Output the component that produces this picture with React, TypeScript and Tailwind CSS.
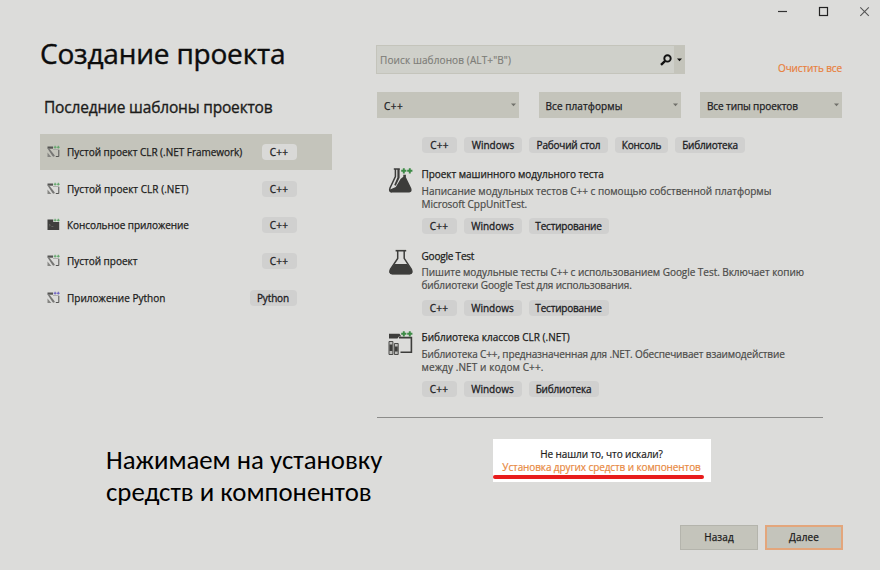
import React from "react";

function Plus({ x, y, s, c }: { x: number; y: number; s: number; c: string }) {
  return (
    <path
      d={`M${x} ${y + s / 2}h${s}M${x + s / 2} ${y}v${s}`}
      stroke={c}
      strokeWidth={s * 0.37}
      fill="none"
    />
  );
}

function ProjectIcon({ accent = "#5fa568" }: { accent?: string }) {
  return (
    <svg className="-mt-px block h-[13px] w-[13px]" viewBox="0 0 13 13">
      <path d="M.5 1.500h5.500v2.200H.5z" fill="#555553" />
      <path d="M.5 3.500h1.800L7.800 10.600 7 11.800 5.600 11.200z" fill="#777775" />
      <path d="M.5 7.500l3.800 4.500H.5z" fill="#858582" />
      <path d="M8.800 11.500h3V4.800" fill="none" stroke="#555553" strokeWidth="1" />
      <path d="M6 4.500h5.800" stroke="#a5a5a1" strokeWidth=".8" />
      <Plus x={6.700} y={0.800} s={2.800} c={accent} />
      <Plus x={9.900} y={0.800} s={2.800} c={accent} />
    </svg>
  );
}

function ConsoleIcon() {
  return (
    <svg className="-mt-px block h-[13px] w-[13px]" viewBox="0 0 13 13">
      <path d="M.5 1.500h5.700v2.500h6V12H.5z" fill="#3f3f3d" />
      <path d="M2 6.200l1.400 1L2 8.200M4.400 8.500h2" fill="none" stroke="#7c7c78" strokeWidth=".6" />
      <Plus x={6.700} y={0.800} s={2.800} c="#5fa568" />
      <Plus x={9.900} y={0.800} s={2.800} c="#5fa568" />
    </svg>
  );
}

function UnitTestIcon() {
  return (
    <svg className="block h-[28px] w-[28px]" viewBox="0 0 28 28">
      <path d="M6.800 3h6" stroke="#3d3d3b" strokeWidth="1.500" />
      <path d="M8.400 3v7.500L3 22q-1.200 3.800 1.800 4" fill="none" stroke="#3d3d3b" strokeWidth="1.500" />
      <path d="M10.400 3h2.200v8.700l-3.800 8-1.600-.8 3.200-7.400z" fill="#3d3d3b" />
      <path d="M13.500 13l2.800-2.300V8.800h2.600v2.400l5.400 11q1.200 3.900-2 4.200H5.200Q2.500 26.200 3 23.500L8.800 21z" fill="#3d3d3b" />
      <Plus x={14.200} y={2.200} s={5.200} c="#3d8b46" />
      <Plus x={20.200} y={2.200} s={5.200} c="#3d8b46" />
    </svg>
  );
}

function FlaskIcon() {
  return (
    <svg className="block h-[28px] w-[28px]" viewBox="0 0 28 28">
      <path d="M8.600 2.700h10.600" stroke="#3d3d3b" strokeWidth="1.600" />
      <path d="M10.700 3v7.400L3.400 21.400q-1.600 4.100 1.800 4.400h17.400q3.400-.3 1.800-4.400L17.200 10.400V3" fill="none" stroke="#3d3d3b" strokeWidth="1.500" />
      <path d="M7.400 16h13l4.400 6q1.200 3.800-2.200 4.200H5.200Q1.800 25.800 3 22z" fill="#3d3d3b" />
    </svg>
  );
}

function LibraryIcon() {
  return (
    <svg className="block h-[28px] w-[28px]" viewBox="0 0 28 28">
      <path d="M2 9.500V4.800h10.500l1.800 2.700h-2.300L10.500 9.500z" fill="#3d3d3b" />
      <path d="M12 8.600H24.400V23.300H13.500" fill="none" stroke="#3d3d3b" strokeWidth="1.600" />
      <path d="M2 12.500h3.900v13H2zM7.400 14.500h3.800v11H7.400z" fill="#bdbdba" stroke="#4a4a48" strokeWidth="1" />
      <path d="M2.500 15.500h2.900v6.500H2.500zM8 17.500h2.700v5H8z" fill="#3d3d3b" />
      <Plus x={14.200} y={2.200} s={5.200} c="#3d8b46" />
      <Plus x={20.200} y={2.200} s={5.200} c="#3d8b46" />
    </svg>
  );
}

function Chip({ label, size, light }: { label: string; size: string; light?: boolean }) {
  return (
    <span
      className={`flex h-4 shrink-0 items-center justify-center whitespace-nowrap rounded-[4px] text-[10px] leading-4 text-[#20201f] [-webkit-text-stroke:0.3px] ${size} ${light ? "bg-[#d9d9d7]" : "bg-[#d0d0cf]"}`}
    >
      {label}
    </span>
  );
}

const recent = [
  { name: "Пустой проект CLR (.NET Framework)", cls: "tracking-[-0.02px]", icon: <ProjectIcon />, tag: "C++", tagCls: "w-[35px] tracking-[0.3px]" },
  { name: "Пустой проект CLR (.NET)", cls: "tracking-[0.04px]", icon: <ProjectIcon />, tag: "C++", tagCls: "w-[35px] tracking-[0.3px]" },
  { name: "Консольное приложение", cls: "tracking-[-0.06px]", icon: <ConsoleIcon />, tag: "C++", tagCls: "w-[35px] tracking-[0.3px]" },
  { name: "Пустой проект", cls: "tracking-[-0.02px]", icon: <ProjectIcon />, tag: "C++", tagCls: "w-[35px] tracking-[0.3px]" },
  { name: "Приложение Python", cls: "tracking-[0.01px]", icon: <ProjectIcon accent="#6a5fc0" />, tag: "Python", tagCls: "w-[47px] tracking-[-0.15px]" },
];

const cpp = { label: "C++", size: "w-[35px] tracking-[0.3px]" };
const win = { label: "Windows", size: "w-[58px]" };
const testing = { label: "Тестирование", size: "w-[80px] tracking-[-0.2px]" };
const library = { label: "Библиотека", size: "w-[70px] tracking-[-0.2px]" };

const templates = [
  {
    name: "Проект машинного модульного теста",
    nameCls: "tracking-[-0.04px]",
    icon: <UnitTestIcon />,
    lines: [
      { text: "Написание модульных тестов C++ с помощью собственной платформы", cls: "tracking-[0.01px]" },
      { text: "Microsoft CppUnitTest.", cls: "tracking-[-0.06px]" },
    ],
    tags: [cpp, win, testing],
  },
  {
    name: "Google Test",
    nameCls: "tracking-[-0.2px]",
    icon: <FlaskIcon />,
    lines: [
      { text: "Пишите модульные тесты C++ с использованием Google Test. Включает копию", cls: "tracking-[-0.04px]" },
      { text: "библиотеки Google Test для использования.", cls: "tracking-[-0.14px]" },
    ],
    tags: [cpp, win, testing],
  },
  {
    name: "Библиотека классов CLR (.NET)",
    nameCls: "tracking-[0.01px]",
    icon: <LibraryIcon />,
    lines: [
      { text: "Библиотека C++, предназначенная для .NET. Обеспечивает взаимодействие", cls: "tracking-[-0.14px]" },
      { text: "между .NET и кодом C++.", cls: "tracking-[0.1px]" },
    ],
    tags: [cpp, win, library],
  },
];

function Combo({ label, cls }: { label: string; cls: string }) {
  return (
    <div className="flex h-[26px] w-[142px] items-center justify-between bg-[#c4c4bb] pl-[7px] pr-[3px] text-[10px] text-[#20201f] [-webkit-text-stroke:0.25px]">
      <span className={`whitespace-nowrap pt-[2px] ${cls}`}>{label}</span>
      <svg className="h-[4px] w-[5px]" viewBox="0 0 5 4">
        <path d="M0 .5h5L2.500 3.300z" fill="#70706b" />
      </svg>
    </div>
  );
}

export default function App() {
  return (
    <div className="flex h-[570px] w-[880px] overflow-hidden bg-[#dcdcda] font-['Open_Sans','Noto_Sans',sans-serif] text-[#1c1c1b]">
      <section className="flex w-[376px] shrink-0 flex-col pl-10">
        <h1 className="mt-[33px] h-10 whitespace-nowrap text-[28px] leading-10 tracking-[-0.2px] text-[#0c0c0c] [-webkit-text-stroke:0.4px]">Создание проекта</h1>
        <h2 className="ml-1 mt-[22px] h-6 whitespace-nowrap text-[15.500px] leading-6 tracking-[-0.18px] [-webkit-text-stroke:0.35px]">Последние шаблоны проектов</h2>
        <ul className="mt-[15px] w-[291.500px]">
          {recent.map((r, i) => (
            <li key={r.name} className={`flex h-[36.400px] items-center pl-[7px] pr-[35px] ${i === 0 ? "bg-[#c4c4bb]" : ""}`}>
              {r.icon}
              <span className={`ml-[7px] grow whitespace-nowrap pt-px text-[10px] [-webkit-text-stroke:0.25px] ${r.cls}`}>{r.name}</span>
              <Chip label={r.tag} size={r.tagCls} light={i === 0} />
            </li>
          ))}
        </ul>
        <p className="ml-[66px] mt-[128px] whitespace-nowrap font-['Carlito','Lato',sans-serif] text-[26.800px] leading-8 text-black">
          <span className="block">Нажимаем на установку</span>
          <span className="block">средств и компонентов</span>
        </p>
      </section>

      <section className="flex grow flex-col">
        <div className="flex h-[23px] items-center justify-end gap-[30px] pr-[10px]">
          <svg className="h-[11px] w-[11px]" viewBox="0 0 11 11"><path d="M1 5.500h9" stroke="#333" strokeWidth="1.200" /></svg>
          <svg className="h-[11px] w-[11px]" viewBox="0 0 11 11"><rect x="1.500" y="1.500" width="8" height="8" fill="none" stroke="#222" strokeWidth="1.200" /></svg>
          <svg className="h-[11px] w-[11px]" viewBox="0 0 11 11"><path d="M1.300 1.300l8.500 8.500M9.800 1.300L1.300 9.800" stroke="#555" strokeWidth="1.100" /></svg>
        </div>

        <div className="mt-[22px] flex h-[29px] items-start">
          <div className="flex h-[29px] w-[309px] items-center border border-[#c4c4bb] bg-[#cfd0ca] pl-[3px] text-[10px] text-[#7d7d78]">
            <span className="grow whitespace-nowrap pt-[2px] tracking-[0.120px] [-webkit-text-stroke:0.15px]">Поиск шаблонов (ALT+"В")</span>
            <svg className="mr-[2px] h-[12px] w-[12px]" viewBox="0 0 12 12">
              <circle cx="7.500" cy="4.400" r="3.200" fill="none" stroke="#111" strokeWidth="1.900" />
              <path d="M5.200 6.800L1 10.800" stroke="#111" strokeWidth="2.400" />
            </svg>
            <div className="flex h-full w-[10px] items-center justify-center bg-[#c4c4bb]">
              <svg className="h-[4px] w-[5px]" viewBox="0 0 5 4"><path d="M0 .5h5L2.500 3.300z" fill="#111" /></svg>
            </div>
          </div>
          <a className="ml-[93px] mt-[15px] whitespace-nowrap text-[10px] leading-4 tracking-[-0.120px] text-[#e8803c] [-webkit-text-stroke:0.2px]">Очистить все</a>
        </div>

        <div className="mt-[18px] flex w-[466px] justify-between pl-px">
          <Combo label="C++" cls="tracking-[0.5px]" />
          <Combo label="Все платформы" cls="tracking-[0.08px]" />
          <Combo label="Все типы проектов" cls="tracking-[-0.1px]" />
        </div>

        <div className="ml-[46px] mt-[19px] flex gap-[7px]">
          <Chip {...cpp} />
          <Chip {...win} />
          <Chip label="Рабочий стол" size="w-[79px] tracking-[-0.2px]" />
          <Chip label="Консоль" size="w-[53px] tracking-[-0.2px]" />
          <Chip {...library} />
        </div>

        <div className="mt-[13.300px]">
          {templates.map((t) => (
            <article key={t.name} className="flex h-[81.500px]">
              <div className="ml-[11px] w-[34.500px] shrink-0">{t.icon}</div>
              <div>
                <h3 className={`h-4 whitespace-nowrap text-[10px] leading-4 [-webkit-text-stroke:0.25px] ${t.nameCls}`}>{t.name}</h3>
                <div className="mt-[2.300px] text-[10px] leading-[13px] text-[#4b4b49] [-webkit-text-stroke:0.2px]">
                  {t.lines.map((l) => (
                    <p key={l.text} className={`whitespace-nowrap ${l.cls}`}>{l.text}</p>
                  ))}
                </div>
                <div className="mt-[7.500px] flex gap-[7px]">
                  {t.tags.map((g) => <Chip key={g.label} {...g} />)}
                </div>
              </div>
            </article>
          ))}
        </div>

        <hr className="ml-px mt-[6px] w-[446px] border-t-[1.500px] border-[#8c8c8a]" />

        <div className="ml-[116.500px] mt-[21px] flex h-[43px] w-[218px] flex-col items-center bg-white pt-[9px] text-[10px] leading-[13px] [-webkit-text-stroke:0.2px]">
          <span className="whitespace-nowrap tracking-[-0.080px]">Не нашли то, что искали?</span>
          <a className="whitespace-nowrap tracking-[-0.110px] text-[#e8893f]">Установка других средств и компонентов</a>
          <div className="mt-px h-1 w-[211px] self-start rounded-full bg-[#e81c1c]" />
        </div>

        <div className="ml-[304px] mt-[43px] flex gap-[7px] text-[10px] tracking-[0.1px] [-webkit-text-stroke:0.25px]">
          <button className="h-[25px] w-[78px] border border-[#b4b4ac] bg-[#c4c4bb] pt-px">Назад</button>
          <button className="h-[25px] w-[78px] border-2 border-[#e3a67c] bg-[#c4c4bb]">Далее</button>
        </div>
      </section>
    </div>
  );
}
